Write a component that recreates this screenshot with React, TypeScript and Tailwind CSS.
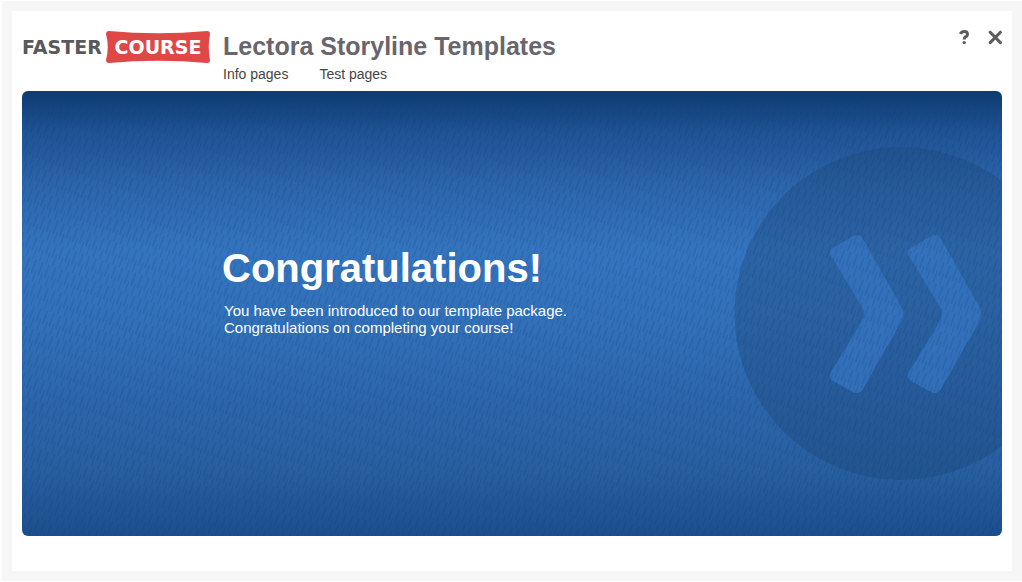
import { ReactNode } from "react";

interface NavLinkProps {
  href: string;
  children: ReactNode;
}

const NavLink = ({ href, children }: NavLinkProps) => (
  <a href={href} className="text-[#444444] hover:underline">
    {children}
  </a>
);

const Logo = () => (
  <a
    href="#home"
    className="flex h-8 w-[188px] shrink-0 items-center font-['DejaVu_Sans',sans-serif] text-[19px] leading-8 font-bold"
  >
    <span className="w-[84px] text-[#595959]">FASTER</span>
    <span className="relative flex h-8 flex-1 items-center justify-center text-white">
      <svg
        viewBox="0 0 104 32"
        preserveAspectRatio="none"
        className="absolute inset-0 h-full w-full"
        aria-hidden="true"
      >
        <path
          d="M3 0 Q52 4.5 101 0 Q104 0 104 3 Q101.5 16 104 29 Q104 32 101 32 Q52 27.5 3 32 Q0 32 0 29 Q3.5 16 0 3 Q0 0 3 0Z"
          fill="#e04848"
        />
      </svg>
      <span className="relative">COURSE</span>
    </span>
  </a>
);

const ArrowBadge = () => (
  <svg
    viewBox="0 0 334 334"
    className="absolute top-14 -right-[66px] h-[334px] w-[334px]"
    aria-hidden="true"
  >
    <circle cx="167" cy="166.5" r="166.5" fill="#1c4474" fillOpacity="0.36" />
    <g fill="#3674c0" fillOpacity="0.8">
      <path
        id="chevron"
        d="M97 109 Q94 104 99 101 L119 89 Q125 86 129 92 L167 159 Q172 167 167 175 L129 242 Q125 248 119 245 L99 234 Q94 231 97 225 L128 174 Q132 167 128 160Z"
      />
      <use href="#chevron" x="78" />
    </g>
  </svg>
);

// Fine slanted weave over the whole banner
const Texture = () => (
  <svg className="absolute inset-0 h-full w-full" aria-hidden="true">
    <defs>
      <pattern
        id="weave"
        width="7"
        height="22"
        patternUnits="userSpaceOnUse"
        patternTransform="rotate(20)"
      >
        <path d="M1 0V14" stroke="#0c3a78" strokeOpacity="0.28" />
        <path d="M4.5 10V22" stroke="#0c3a78" strokeOpacity="0.2" />
      </pattern>
    </defs>
    <rect width="100%" height="100%" fill="url(#weave)" />
  </svg>
);

export default function App() {
  return (
    <div className="min-h-screen bg-white pt-px pb-px pl-0.5 font-['Liberation_Sans',Arial,sans-serif]">
      <div className="bg-[#f6f6f6] p-2.5">
        <div className="bg-white px-2.5 pb-[35px]">
          <header className="flex h-20 items-start">
            <div className="pt-5">
              <Logo />
            </div>
            <div className="pt-5 pl-[13px]">
              <h1 className="text-[25px] leading-[30px] font-bold text-[#69656c]">
                Lectora Storyline Templates
              </h1>
              <nav className="flex gap-[31px] pt-[5px] text-[14px] leading-[17px]">
                <NavLink href="#info">Info pages</NavLink>
                <NavLink href="#test">Test pages</NavLink>
              </nav>
            </div>
            <div className="ml-auto flex items-center gap-4 pt-4">
              <button
                type="button"
                aria-label="Help"
                className="flex h-5 w-4 items-center justify-center"
              >
                <svg viewBox="0 0 16 20" className="h-5 w-4" fill="none" aria-hidden="true">
                  <path
                    d="M6.5 7 Q7.3 4.4 10.2 4.4 Q13.5 4.4 13.5 7.2 Q13.5 8.9 11.5 9.9 Q10.2 10.6 10.2 12.4"
                    stroke="#5c5c5c"
                    strokeWidth="3"
                  />
                  <circle cx="10.2" cy="15.6" r="1.7" fill="#5c5c5c" />
                </svg>
              </button>
              <button
                type="button"
                aria-label="Close"
                className="flex h-5 w-4 items-center justify-center"
              >
                <svg viewBox="0 0 16 20" className="h-5 w-4" fill="none" aria-hidden="true">
                  <path
                    d="M4.2 5.2 L14.4 15.6 M14.4 5.2 L4.2 15.6"
                    stroke="#5c5c5c"
                    strokeWidth="3"
                    strokeLinecap="round"
                  />
                </svg>
              </button>
            </div>
          </header>

          <main className="relative min-h-[445px] overflow-hidden rounded-md bg-[linear-gradient(180deg,#0e3b71_0%,#1e5293_9%,#2c65aa_21%,#3474be_36%,#3271b9_50%,#2c65aa_70%,#275f9f_85%,#1c4e8d_100%)]">
            <ArrowBadge />
            <Texture />
            <section className="relative pt-[153px] pl-[200px] text-white">
              <h2 className="text-[40px] leading-[48px] font-bold">Congratulations!</h2>
              <p className="pt-[10px] pl-0.5 text-[15px] leading-[17px]">
                You have been introduced to our template package.
                <br />
                Congratulations on completing your course!
              </p>
            </section>
          </main>
        </div>
      </div>
    </div>
  );
}
